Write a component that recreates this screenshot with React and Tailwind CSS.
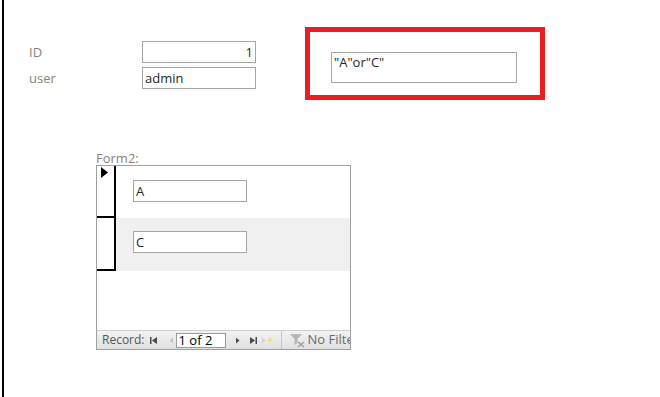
import React from "react";

const labelColor = "text-[#8a8179]";

function TextBox({ value, className = "", align = "left" }) {
  return (
    <div
      className={`h-[22px] border border-[#a6a6a6] bg-white px-[2px] text-[13px] leading-[20px] text-[#262626] ${
        align === "right" ? "text-right" : "text-left"
      } ${className}`}
    >
      {value}
    </div>
  );
}

function NavIcon({ children, muted }) {
  return (
    <svg
      width="9"
      height="9"
      viewBox="0 0 9 9"
      className={`shrink-0 ${muted ? "text-[#c4c4c4]" : "text-[#4a4a4a]"}`}
      fill="currentColor"
    >
      {children}
    </svg>
  );
}

export default function App() {
  return (
    <div className="w-[660px] h-[397px] bg-white overflow-hidden font-['Open_Sans','Noto_Sans',sans-serif]">
      <div className="ml-[2px] h-full border-l-2 border-black pl-[25px] pt-[27px]">
        {/* main form header fields */}
        <div className="flex items-start">
          <div className="mt-[14px] grid grid-cols-[113px_114px] gap-y-[4px] items-center">
            <div className={`text-[13px] leading-[18px] ${labelColor}`}>ID</div>
            <TextBox value="1" align="right" />
            <div className={`text-[13px] leading-[18px] ${labelColor}`}>user</div>
            <TextBox value="admin" className="h-[21px]" />
          </div>

          <div className="ml-[49px] w-[240px] h-[73px] border-[5px] border-[#ed1c24] pl-[21px] pt-[20px]">
            <div className="w-[186px] h-[31px] border border-[#a6a6a6] px-[2px] text-[13px] leading-[18px] text-[#262626]">
              "A"or"C"
            </div>
          </div>
        </div>

        {/* subform */}
        <div className="ml-[67px] mt-[51px] w-[255px]">
          <div className={`text-[13px] leading-[14px] ${labelColor}`}>Form2:</div>
          <div className="h-[185px] border border-[#a0a0a0] flex flex-col">
            <div className="flex-1">
              <div className="flex h-[52px]">
                <div className="w-[19px] border-r-2 border-b-2 border-black shrink-0 pl-[4px] pt-[1px]">
                  <svg width="7" height="11" viewBox="0 0 7 11">
                    <path d="M0 0 L7 5.5 L0 11 Z" fill="#000" />
                  </svg>
                </div>
                <div className="flex-1 pl-[17px] pt-[14px]">
                  <TextBox value="A" className="w-[114px]" />
                </div>
              </div>
              <div className="flex h-[53px]">
                <div className="w-[19px] border-r-2 border-b-2 border-black shrink-0" />
                <div className="flex-1 bg-[#f0f0f0] pl-[17px] pt-[13px]">
                  <TextBox value="C" className="w-[114px] bg-[#f0f0f0]" />
                </div>
              </div>
            </div>

            {/* record navigation bar */}
            <div className="h-[19px] flex items-center bg-gradient-to-b from-[#f2f2f2] to-[#e1e1e1] border-t border-[#d0d0d0] text-[12px] text-[#555] whitespace-nowrap overflow-hidden">
              <span className="ml-[5px] shrink-0">Record:</span>
              <span className="ml-[4px] flex items-center shrink-0">
                <NavIcon>
                  <rect x="1" y="1" width="1.5" height="7" />
                  <path d="M8 1 L3 4.5 L8 8 Z" />
                </NavIcon>
              </span>
              <span className="ml-[9px] flex items-center shrink-0">
                <NavIcon muted>
                  <path d="M6 1.5 L2.5 4.5 L6 7.5 Z" />
                </NavIcon>
              </span>
              <div className="shrink-0 w-[50px] h-[15px] border border-[#9a9a9a] bg-white text-[13px] leading-[13px] text-black pl-[2px]">
                1 of 2
              </div>
              <span className="ml-[8px] flex items-center shrink-0">
                <NavIcon>
                  <path d="M2 1.5 L5.5 4.5 L2 7.5 Z" />
                </NavIcon>
              </span>
              <span className="ml-[6px] flex items-center shrink-0">
                <NavIcon>
                  <path d="M1 1 L6 4.5 L1 8 Z" />
                  <rect x="6.5" y="1" width="1.5" height="7" />
                </NavIcon>
              </span>
              <span className="ml-[3px] flex items-center shrink-0">
                <svg width="13" height="9" viewBox="0 0 13 9">
                  <path d="M1 1.5 L4.5 4.5 L1 7.5 Z" fill="#d0d0d0" />
                  <rect x="6" y="1" width="6" height="6" fill="#f6eec4" />
                  <path d="M9 1 V7 M6 4 H12 M7 2 L11 6 M11 2 L7 6" stroke="#e6d690" strokeWidth="0.8" />
                </svg>
              </span>
              <span className="ml-[7px] h-full border-l border-[#c4c4c4] shrink-0" />
              <span className="ml-[7px] flex items-center shrink-0">
                <svg width="18" height="15" viewBox="0 0 18 15">
                  <path d="M1 1 H13 L8.5 6 V10 L5.5 12 V6 Z" fill="#b5b5b5" />
                  <path d="M9 9 L15 14 M15 9 L9 14" stroke="#9a9a9a" strokeWidth="1.3" />
                </svg>
              </span>
              <span className="ml-[1px] shrink-0 text-[13px] text-[#6a6a6a]">No Filter</span>
            </div>
          </div>
        </div>
      </div>
    </div>
  );
}
